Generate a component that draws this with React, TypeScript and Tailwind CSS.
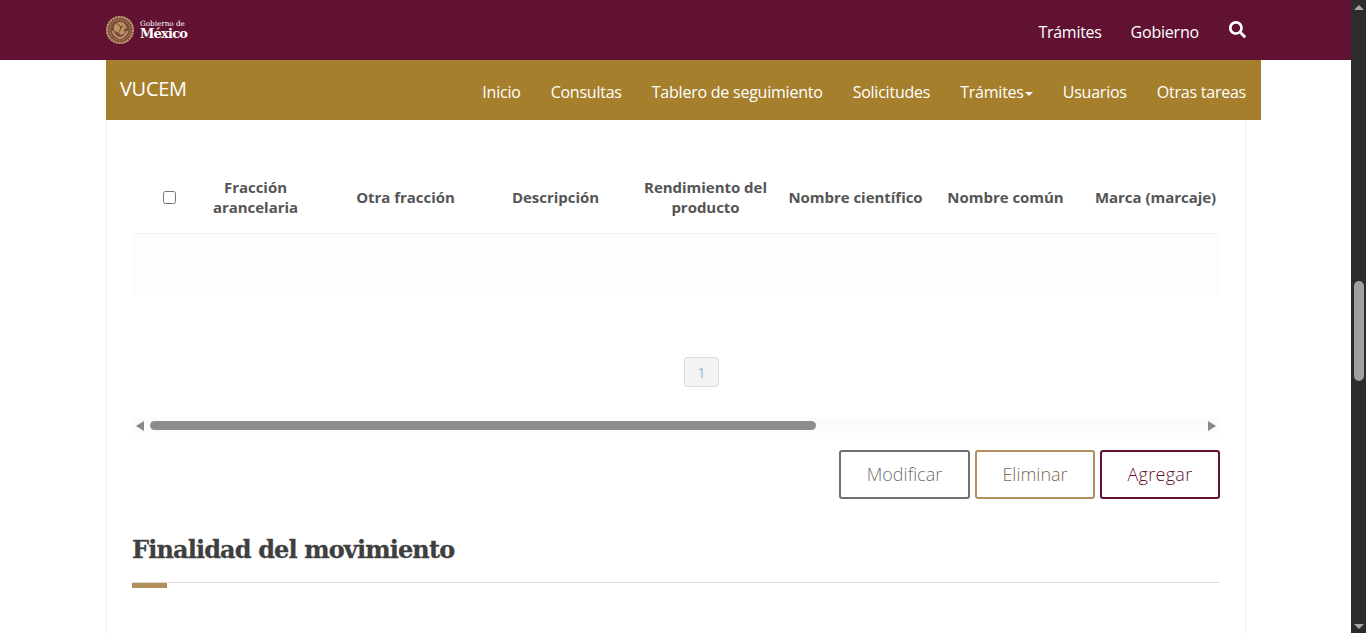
import { FaSearch } from "react-icons/fa";

const columns = [
  ["Fracción", "arancelaria"],
  ["Otra fracción"],
  ["Descripción"],
  ["Rendimiento del", "producto"],
  ["Nombre científico"],
  ["Nombre común"],
  ["Marca (marcaje)"],
];

const links = ["Inicio", "Consultas", "Tablero de seguimiento", "Solicitudes"];

function Seal() {
  return (
    <svg width="30" height="30" viewBox="0 0 30 30" fill="none">
      <circle cx="15" cy="15" r="14" fill="#7d4a3c" />
      <circle cx="15" cy="15" r="13" stroke="#c09a6b" strokeWidth="2" strokeDasharray="2 0.8" />
      <circle cx="15" cy="15" r="10.3" stroke="#a98255" strokeWidth="0.8" />
      <path d="M7.5 16c1.5 4.5 5 7 7.5 7s6-2.5 7.5-7" stroke="#c09a6b" strokeWidth="1.8" />
      <path d="M9 11c2-4 7-5 10-3l3 5-3 1 1 4-4 2-3-3-4-1z" fill="#b8925f" />
      <path d="M12 8.5l4 3.5-1.5 4.5M18 11l-2 1" stroke="#6d2c35" strokeWidth="0.9" />
    </svg>
  );
}

export default function App() {
  return (
    <div className="flex h-[633px] w-full overflow-hidden bg-white font-['Open_Sans',sans-serif]">
      <div className="flex-1 min-w-0">
        {/* Top bar */}
        <header className="h-[60px] bg-[#611232] pl-[106px]">
          <div className="flex h-full w-[1140px] items-center justify-between">
            <div className="-ml-[1px] flex items-center gap-[5px] text-white">
              <Seal />
              <div className="flex flex-col font-['DejaVu_Serif',serif]">
                <span className="text-[7.2px] leading-[8px]">Gobierno de</span>
                <span className="text-[13px] leading-[12px] font-bold tracking-[-0.8px]">México</span>
              </div>
            </div>
            <nav className="mt-[3px] flex items-center text-[16px] text-white">
              <a className="tracking-[-0.3px]">Trámites</a>
              <a className="ml-[29px] tracking-[-0.2px]">Gobierno</a>
              <FaSearch size={17} className="ml-[30px] mb-[4px]" />
            </nav>
          </div>
        </header>

        {/* Sub nav */}
        <div className="ml-[106px] flex h-[60px] w-[1155px] bg-[#a57f2c] pl-[14px] pr-[15px] text-white">
          <div className="mt-[15px] text-[20px] leading-[28px] tracking-[-0.3px]">VUCEM</div>
          <nav className="ml-auto mt-[20px] flex gap-[30px] text-[16px] leading-[24px] tracking-[-0.23px]">
            {links.map((l) => (
              <a key={l}>{l}</a>
            ))}
            <a className="flex h-[24px] items-center">
              Trámites
              <span className="ml-[1px] mt-[3px] border-x-[4px] border-t-[4px] border-x-transparent border-t-white" />
            </a>
            <a>Usuarios</a>
            <a>Otras tareas</a>
          </nav>
        </div>

        {/* Panel */}
        <main className="ml-[106px] h-[513px] w-[1140px] border-x border-[#eeeeee] px-[25px] pt-[40px]">
          <div className="flex h-[74px] items-center overflow-hidden border-b border-[#f2f2f2] pt-[2px] text-[15px] leading-[20px] font-bold tracking-[-0.03px] text-[#555555]">
            <div className="flex w-[48px] flex-none justify-end pr-[4px]">
              <span className="h-[13px] w-[13px] rounded-[2.5px] border border-[#767676] bg-white" />
            </div>
            {columns.map((c) => (
              <div key={c[0]} className="mb-[2px] w-[150px] flex-none pl-[1px] text-center">
                {c.map((line) => (
                  <div key={line}>{line}</div>
                ))}
              </div>
            ))}
          </div>
          <div className="h-[61px] bg-[#fdfdfd]" />

          <div className="mt-[62px] flex justify-center pl-[51px]">
            <span className="flex h-[30px] w-[35px] items-center justify-center rounded-[3px] border border-[#dddddd] bg-[#f3f3f3] text-[14px] text-[#9ab8d8]">
              1
            </span>
          </div>

          {/* Horizontal scrollbar */}
          <div className="mt-[31px] flex h-[15px] items-center bg-[#fbfbfb] px-[4px]">
            <span className="border-y-[5px] border-r-[8px] border-y-transparent border-r-[#888888]" />
            <span className="ml-[6px] h-[9px] w-[666px] rounded-full bg-[#8d8d8d]" />
            <span className="ml-auto border-y-[5px] border-l-[8px] border-y-transparent border-l-[#888888]" />
          </div>

          <div className="mt-[17px] flex justify-end gap-[5px] text-[18px] font-light">
            <button className="h-[49px] w-[131px] rounded-[3px] border-2 border-[#707070] bg-white text-[#707070]">
              Modificar
            </button>
            <button className="h-[49px] w-[120px] rounded-[3px] border-2 border-[#b38e5d] bg-white text-[#7a6a50]">
              Eliminar
            </button>
            <button className="h-[49px] w-[120px] rounded-[3px] border-2 border-[#611232] bg-white tracking-[0.3px] text-[#611232]">
              Agregar
            </button>
          </div>

          <h2 className="mt-[33px] font-['DejaVu_Serif',serif] text-[24px] leading-[36px] font-bold tracking-[-0.87px] text-[#3f3f3f] [-webkit-text-stroke:0.3px_#3f3f3f]">
            Finalidad del movimiento
          </h2>
          <div className="mt-[14px] border-t border-[#dddddd]">
            <div className="h-[5px] w-[35px] bg-[#b38e5d]" />
          </div>
        </main>
      </div>

      {/* Window scrollbar */}
      <div className="flex w-[15px] flex-none flex-col items-center justify-between bg-[#2c2c2c] py-[5px]">
        <span className="border-x-[5px] border-b-[5px] border-x-transparent border-b-[#a8a8a8]" />
        <span className="mb-[243px] mt-[271px] h-[100px] w-[10px] flex-none rounded-full bg-[#9f9f9f]" />
        <span className="border-x-[5px] border-t-[5px] border-x-transparent border-t-[#a8a8a8]" />
      </div>
    </div>
  );
}
